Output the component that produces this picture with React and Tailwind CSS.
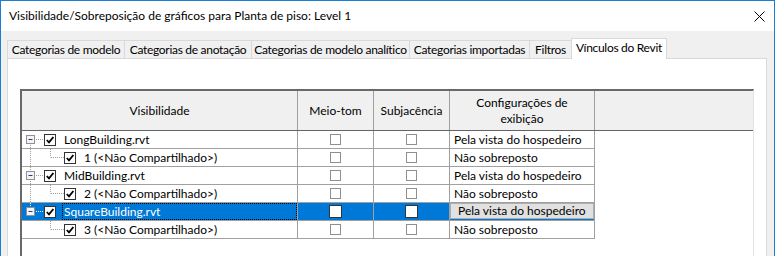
import React from 'react'

const tabs = [
  { label: 'Categorias de modelo', w: 'w-[118px] border-l' },
  { label: 'Categorias de anotação', w: 'w-[127px]' },
  { label: 'Categorias de modelo analítico', w: 'w-[158px]' },
  { label: 'Categorias importadas', w: 'w-[120px]' },
  { label: 'Filtros', w: 'w-[42px]' },
]

const rows = [
  { kind: 'parent', label: 'LongBuilding.rvt', up: false, down: true, mode: 'Pela vista do hospedeiro' },
  { kind: 'child', label: '1 (<Não Compartilhado>)', cont: true, mode: 'Não sobreposto' },
  { kind: 'parent', label: 'MidBuilding.rvt', up: true, down: true, mode: 'Pela vista do hospedeiro' },
  { kind: 'child', label: '2 (<Não Compartilhado>)', cont: true, mode: 'Não sobreposto' },
  { kind: 'parent', label: 'SquareBuilding.rvt', up: true, down: false, mode: 'Pela vista do hospedeiro', selected: true },
  { kind: 'child', label: '3 (<Não Compartilhado>)', cont: false, mode: 'Não sobreposto' },
]

function CheckBox() {
  return (
    <div className="w-[12px] h-[12px] shrink-0 border border-[#333] bg-white flex items-center justify-center">
      <svg width="10" height="10" viewBox="0 0 10 10">
        <path d="M1.8 5 L4 7.4 L8.4 2" fill="none" stroke="#000" strokeWidth="1.8" />
      </svg>
    </div>
  )
}

function ParentLines({ up, down, sel }) {
  const c = sel ? '#ffffff' : '#a0a0a0'
  return (
    <svg width="22" height="17" className="shrink-0">
      {up && <line x1="8.5" y1="0" x2="8.5" y2="4" stroke={c} strokeDasharray="1 1" />}
      {down && <line x1="8.5" y1="14" x2="8.5" y2="17" stroke={c} strokeDasharray="1 1" />}
      <line x1="14" y1="8.5" x2="22" y2="8.5" stroke={c} strokeDasharray="1 1" />
      <rect x="4.5" y="4.5" width="8" height="8" fill="#f4f4f4" stroke="#919191" />
      <line x1="6.5" y1="8.5" x2="10.5" y2="8.5" stroke="#1e3f8f" />
    </svg>
  )
}

function ChildLines({ cont }) {
  const c = '#a0a0a0'
  return (
    <svg width="42" height="17" className="shrink-0">
      {cont && <line x1="8.5" y1="0" x2="8.5" y2="17" stroke={c} strokeDasharray="1 1" />}
      <line x1="28.5" y1="0" x2="28.5" y2="8.5" stroke={c} strokeDasharray="1 1" />
      <line x1="29" y1="8.5" x2="42" y2="8.5" stroke={c} strokeDasharray="1 1" />
    </svg>
  )
}

function SmallBox({ sel }) {
  return sel ? (
    <div className="w-[13px] h-[13px] border border-[#333] bg-white" />
  ) : (
    <div className="w-[11px] h-[11px] border border-[#8f8f8f] bg-white" />
  )
}

export default function App() {
  return (
    <div className="w-[775px] h-[256px] overflow-hidden bg-[#f0f0f0] border-x border-t border-[#1a7fd4] font-['Lato',sans-serif] text-[12px] leading-none text-black flex flex-col whitespace-nowrap">
      {/* Title bar */}
      <div className="h-[30px] bg-white flex items-center justify-between pl-[8px] pr-[9px] shrink-0">
        <span>Visibilidade/Sobreposição de gráficos para Planta de piso: Level 1</span>
        <svg width="11" height="11" viewBox="0 0 11 11">
          <path d="M0.5 0.5 L10.5 10.5 M10.5 0.5 L0.5 10.5" stroke="#000" strokeWidth="1" />
        </svg>
      </div>

      <div className="flex-1 flex flex-col pl-[6px] pr-[7px] pt-[7px]">
        {/* Tabs */}
        <div className="flex items-end h-[20px] shrink-0 tracking-[-0.3px]">
          {tabs.map((t) => (
            <div
              key={t.label}
              className={`${t.w} shrink-0 h-[18px] border-t border-r border-[#d9d9d9] bg-[#f0f0f0] flex items-center justify-center`}
            >
              {t.label}
            </div>
          ))}
          <div className="relative z-10 shrink-0 w-[96px] h-[21px] -mb-px -ml-px border-x border-t border-[#d9d9d9] bg-white flex items-center justify-center pb-[2px]">
            Vínculos do Revit
          </div>
        </div>

        {/* Panel */}
        <div className="flex-1 border-x border-t border-[#d9d9d9] bg-white pl-[12px] pt-[30px]">
          <div className="w-[734px] h-[200px] border-l-2 border-t-2 border-r border-l-[#696969] border-t-[#696969] border-r-[#e3e3e3]">
            {/* Header */}
            <div className="flex h-[40px] bg-[#f0f0f0] border-b border-[#646464]">
              <div className="w-[276px] border-r border-[#a0a0a0] flex items-center justify-center">Visibilidade</div>
              <div className="w-[76px] border-r border-[#a0a0a0] flex items-center justify-center">Meio-tom</div>
              <div className="w-[76px] border-r border-[#a0a0a0] flex items-center justify-center">Subjacência</div>
              <div className="w-[145px] border-r border-[#a0a0a0] flex flex-col items-center justify-center leading-[16px]">
                <span>Configurações de</span>
                <span>exibição</span>
              </div>
              <div className="flex-1" />
            </div>

            {/* Body */}
            {rows.map((r) => (
              <div
                key={r.label}
                className={`flex w-[573px] h-[18px] border-b border-[#a0a0a0] ${r.selected ? 'bg-[#0078d7] text-white' : ''}`}
              >
                <div className="w-[276px] border-r border-[#a0a0a0] flex items-center">
                  {r.kind === 'parent' ? (
                    <>
                      <ParentLines up={r.up} down={r.down} sel={r.selected} />
                      <CheckBox />
                      {r.selected ? (
                        <div className="ml-[6px] flex-1 h-full border border-dotted border-black flex items-center pl-px">
                          {r.label}
                        </div>
                      ) : (
                        <span className="ml-[8px]">{r.label}</span>
                      )}
                    </>
                  ) : (
                    <>
                      <ChildLines cont={r.cont} />
                      <CheckBox />
                      <span className="ml-[8px]">{r.label}</span>
                    </>
                  )}
                </div>
                <div className="w-[76px] border-r border-[#a0a0a0] flex items-center justify-center">
                  <SmallBox sel={r.selected} />
                </div>
                <div className="w-[76px] border-r border-[#a0a0a0] flex items-center justify-center">
                  <SmallBox sel={r.selected} />
                </div>
                <div className="w-[145px] border-r border-[#a0a0a0] flex items-center">
                  {r.selected ? (
                    <div className="w-[144px] h-[16px] self-start bg-[#e1e1e1] border border-[#adadad] text-black flex items-center pl-[7px]">
                      {r.mode}
                    </div>
                  ) : (
                    <span className="pl-[4px]">{r.mode}</span>
                  )}
                </div>
              </div>
            ))}
          </div>
        </div>
      </div>
    </div>
  )
}
